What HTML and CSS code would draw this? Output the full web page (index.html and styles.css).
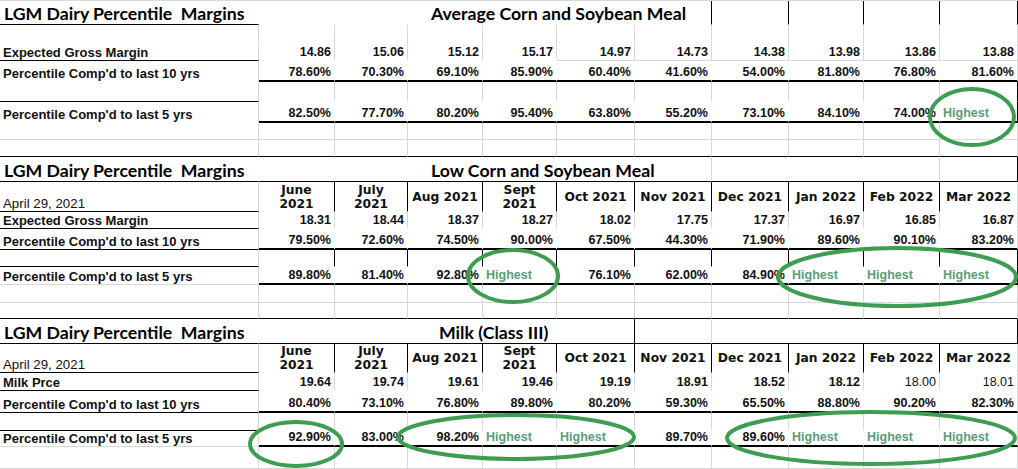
FILE: index.html
```html
<!DOCTYPE html>
<html>
<head>
<meta charset="utf-8">
<title>LGM Dairy Percentile Margins</title>
<link rel="stylesheet" href="styles.css">
</head>
<body>
<div class="page">
  <!-- Section 1: Average Corn and Soybean Meal -->
  <div class="sec s1">
    <div class="c ttl bb nr">LGM Dairy Percentile&nbsp; Margins</div>
    <div class="c nb nr"></div>
    <div class="c ttl2 nb br sp5 ind1">Average Corn and Soybean Meal</div>
    <div class="c nb br"></div><div class="c nb br"></div><div class="c nb br"></div><div class="c nb br"></div>

    <div class="c nb"></div>
    <div class="c nb"></div><div class="c nb"></div><div class="c nb"></div><div class="c nb"></div><div class="c nb"></div>
    <div class="c nb"></div><div class="c nb"></div><div class="c nb"></div><div class="c nb"></div><div class="c nb"></div>

    <div class="c lbl bb">Expected Gross Margin</div>
    <div class="c num nb">14.86</div><div class="c num nb">15.06</div><div class="c num nb">15.12</div><div class="c num nb">15.17</div>
    <div class="c num">14.97</div><div class="c num">14.73</div><div class="c num">14.38</div><div class="c num">13.98</div><div class="c num">13.86</div><div class="c num">13.88</div>

    <div class="c lbl nb">Percentile Comp'd to last 10 yrs</div>
    <div class="c num tb nr">78.60%</div><div class="c num tb nr">70.30%</div><div class="c num tb nr">69.10%</div><div class="c num tb nr">85.90%</div><div class="c num tb nr">60.40%</div>
    <div class="c num tb nr">41.60%</div><div class="c num tb nr">54.00%</div><div class="c num tb nr">81.80%</div><div class="c num tb nr">76.80%</div><div class="c num tb">81.60%</div>

    <div class="c bb"></div>
    <div class="c nb"></div><div class="c nb"></div><div class="c nb"></div><div class="c nb"></div><div class="c nb"></div>
    <div class="c nb"></div><div class="c nb"></div><div class="c nb"></div><div class="c nb"></div><div class="c nb br"></div>

    <div class="c lbl nb">Percentile Comp'd to last 5 yrs</div>
    <div class="c num tb nr">82.50%</div><div class="c num tb nr">77.70%</div><div class="c num tb nr">80.20%</div><div class="c num tb nr">95.40%</div><div class="c num tb nr">63.80%</div>
    <div class="c num tb nr">55.20%</div><div class="c num tb nr">73.10%</div><div class="c num tb nr">84.10%</div><div class="c num tb nr">74.00%</div><div class="c hi tb br">Highest</div>

    <div class="c"></div>
    <div class="c"></div><div class="c"></div><div class="c"></div><div class="c"></div><div class="c"></div>
    <div class="c"></div><div class="c"></div><div class="c"></div><div class="c"></div><div class="c"></div>

    <div class="c bb"></div>
    <div class="c bb"></div><div class="c bb"></div><div class="c bb"></div><div class="c bb"></div><div class="c bb"></div>
    <div class="c bb"></div><div class="c bb"></div><div class="c bb"></div><div class="c bb"></div><div class="c bb"></div>
  </div>

  <!-- Section 2: Low Corn and Soybean Meal -->
  <div class="sec s2">
    <div class="c ttl bb nr">LGM Dairy Percentile&nbsp; Margins</div>
    <div class="c ttl2 bb sp6 ind2">Low Corn and Soybean Meal</div>
    <div class="c bb sp3"></div>
    <div class="c bb br"></div>

    <div class="c lbl2 bb">April 29, 2021</div>
    <div class="c hd nb br">June<br>2021</div><div class="c hd nb br">July<br>2021</div><div class="c hd nb br">Aug 2021</div><div class="c hd nb br">Sept<br>2021</div><div class="c hd nb br">Oct 2021</div>
    <div class="c hd nb br">Nov 2021</div><div class="c hd nb br">Dec 2021</div><div class="c hd nb br">Jan 2022</div><div class="c hd nb br">Feb 2022</div><div class="c hd nb">Mar 2022</div>

    <div class="c lbl bb">Expected Gross Margin</div>
    <div class="c num nb">18.31</div><div class="c num nb">18.44</div><div class="c num nb">18.37</div><div class="c num nb">18.27</div><div class="c num nb">18.02</div>
    <div class="c num nb">17.75</div><div class="c num nb">17.37</div><div class="c num nb">16.97</div><div class="c num nb">16.85</div><div class="c num nb">16.87</div>

    <div class="c lbl bb">Percentile Comp'd to last 10 yrs</div>
    <div class="c num tb nr">79.50%</div><div class="c num tb nr">72.60%</div><div class="c num tb nr">74.50%</div><div class="c num tb nr">90.00%</div><div class="c num tb nr">67.50%</div>
    <div class="c num tb nr">44.30%</div><div class="c num tb nr">71.90%</div><div class="c num tb nr">89.60%</div><div class="c num tb nr">90.10%</div><div class="c num tb">83.20%</div>

    <div class="c bb"></div>
    <div class="c nb br"></div><div class="c nb br"></div><div class="c nb br"></div><div class="c nb br"></div><div class="c nb br"></div>
    <div class="c nb br"></div><div class="c nb br"></div><div class="c nb br"></div><div class="c nb br"></div><div class="c nb br"></div>

    <div class="c lbl">Percentile Comp'd to last 5 yrs</div>
    <div class="c num tb nr">89.80%</div><div class="c num tb nr">81.40%</div><div class="c num tb nr">92.80%</div><div class="c hi tb nr">Highest</div><div class="c num tb nr">76.10%</div>
    <div class="c num tb nr">62.00%</div><div class="c num tb nr">84.90%</div><div class="c hi tb nr">Highest</div><div class="c hi tb nr">Highest</div><div class="c hi tb br">Highest</div>

    <div class="c"></div>
    <div class="c"></div><div class="c"></div><div class="c"></div><div class="c"></div><div class="c"></div>
    <div class="c"></div><div class="c"></div><div class="c"></div><div class="c"></div><div class="c"></div>

    <div class="c bb"></div>
    <div class="c bb"></div><div class="c bb"></div><div class="c bb"></div><div class="c bb"></div><div class="c bb"></div>
    <div class="c bb"></div><div class="c bb"></div><div class="c bb"></div><div class="c bb"></div><div class="c bb"></div>
  </div>

  <!-- Section 3: Milk (Class III) -->
  <div class="sec s3">
    <div class="c ttl bb nr">LGM Dairy Percentile&nbsp; Margins</div>
    <div class="c ttl2 bb br sp5 ind3">Milk (Class III)</div>
    <div class="c bb"></div>
    <div class="c bb br sp4"></div>

    <div class="c lbl2 bb">April 29, 2021</div>
    <div class="c hd nb br">June<br>2021</div><div class="c hd nb br">July<br>2021</div><div class="c hd nb br">Aug 2021</div><div class="c hd nb br">Sept<br>2021</div><div class="c hd nb br">Oct 2021</div>
    <div class="c hd nb br">Nov 2021</div><div class="c hd nb br">Dec 2021</div><div class="c hd nb br">Jan 2022</div><div class="c hd nb br">Feb 2022</div><div class="c hd nb">Mar 2022</div>

    <div class="c lbl bb">Milk Prce</div>
    <div class="c num nb">19.64</div><div class="c num nb">19.74</div><div class="c num nb">19.61</div><div class="c num nb">19.46</div><div class="c num nb">19.19</div>
    <div class="c num nb">18.91</div><div class="c num nb">18.52</div><div class="c num nb">18.12</div><div class="c num reg nb">18.00</div><div class="c num reg nb">18.01</div>

    <div class="c lbl bb">Percentile Comp'd to last 10 yrs</div>
    <div class="c num tb nr">80.40%</div><div class="c num tb nr">73.10%</div><div class="c num tb nr">76.80%</div><div class="c num tb nr">89.80%</div><div class="c num tb nr">80.20%</div>
    <div class="c num tb nr">59.30%</div><div class="c num tb nr">65.50%</div><div class="c num tb nr">88.80%</div><div class="c num tb nr">90.20%</div><div class="c num tb">82.30%</div>

    <div class="c bb"></div>
    <div class="c nb"></div><div class="c nb"></div><div class="c nb"></div><div class="c nb"></div><div class="c nb"></div>
    <div class="c nb"></div><div class="c nb"></div><div class="c nb"></div><div class="c nb"></div><div class="c nb"></div>

    <div class="c lbl">Percentile Comp'd to last 5 yrs</div>
    <div class="c num tb nr">92.90%</div><div class="c num tb nr">83.00%</div><div class="c num tb nr">98.20%</div><div class="c hi tb nr">Highest</div><div class="c hi tb nr">Highest</div>
    <div class="c num tb nr">89.70%</div><div class="c num tb nr">89.60%</div><div class="c hi tb nr">Highest</div><div class="c hi tb nr">Highest</div><div class="c hi tb">Highest</div>

    <div class="c"></div>
    <div class="c"></div><div class="c"></div><div class="c"></div><div class="c"></div><div class="c"></div>
    <div class="c"></div><div class="c"></div><div class="c"></div><div class="c"></div><div class="c"></div>
  </div>

  <svg class="rings" width="1018" height="469" viewBox="0 0 1018 469" aria-hidden="true">
    <ellipse cx="972" cy="117" rx="42" ry="28"/>
    <ellipse cx="513" cy="276" rx="45" ry="26"/>
    <ellipse cx="897" cy="277" rx="119" ry="29"/>
    <ellipse cx="296" cy="444" rx="46" ry="22"/>
    <ellipse cx="516" cy="437" rx="118" ry="22"/>
    <ellipse cx="871" cy="438" rx="144" ry="26"/>
  </svg>
</div>
</body>
</html>
```

FILE: styles.css
```css
html, body {
  margin: 0;
  padding: 0;
  background: #ffffff;
}

.page {
  position: relative;
  width: 1018px;
  height: 469px;
  overflow: hidden;
  font-family: "Liberation Sans", Arial, sans-serif;
  color: #111;
}

.sec {
  display: grid;
  grid-template-columns: 259px 76px 73px 75px 74px 78px 77px 77px 75px 76px 78px;
}

.s1 {
  border-top: 1px solid #d9d9d9;
  grid-template-rows: 24px 19px 17px 21px 20px 21px 17px 17px;
}

.s2 {
  grid-template-rows: 25px 30px 17px 21px 17px 18px 18px 16px;
}

.s3 {
  grid-template-rows: 25px 29px 18px 22px 18px 16px 22px;
}

.c {
  box-sizing: border-box;
  border-right: 1px solid #d9d9d9;
  border-bottom: 1px solid #d9d9d9;
  display: flex;
  align-items: flex-end;
  white-space: nowrap;
  min-width: 0;
  overflow: visible;
  line-height: 15px;
}

.nb { border-bottom-color: transparent; }
.nr { border-right-color: transparent; }
.br { border-right-color: #000; }
.bb { border-bottom-color: #000; }
.tb { border-bottom: 2px solid #000; }

.sp3 { grid-column: span 3; }
.sp4 { grid-column: span 4; }
.sp5 { grid-column: span 5; }
.sp6 { grid-column: span 6; }

.ttl, .ttl2 {
  font-family: Lato, "Open Sans", sans-serif;
  font-weight: 700;
  font-size: 17.7px;
  line-height: 20px;
  color: #000;
}

.ttl { padding-left: 4px; }
.ind1 { padding-left: 96px; }
.ind2 { padding-left: 172px; }
.ind3 { padding-left: 180px; }

.lbl {
  font-weight: 700;
  font-size: 13px;
  padding-left: 3px;
}

.lbl2 {
  font-weight: 400;
  font-size: 13.3px;
  padding-left: 3px;
}

.num {
  justify-content: flex-end;
  padding-right: 3px;
  font-weight: 700;
  font-size: 12.5px;
}

.num.reg { font-weight: 400; }

.hi {
  padding-left: 3px;
  font-weight: 700;
  font-size: 12.5px;
  color: #5a9e78;
}

.hd {
  align-items: center;
  justify-content: center;
  text-align: center;
  font-family: "DejaVu Sans", Verdana, sans-serif;
  font-weight: 700;
  font-size: 12.3px;
  line-height: 14px;
}

.rings {
  position: absolute;
  left: 0;
  top: 0;
  pointer-events: none;
}

.rings ellipse {
  fill: none;
  stroke: #3d9d50;
  stroke-width: 4;
}
```
